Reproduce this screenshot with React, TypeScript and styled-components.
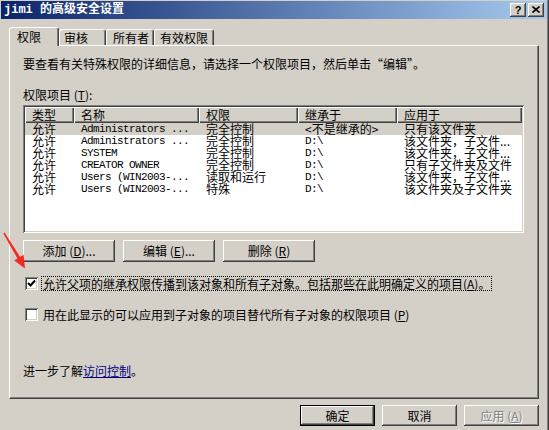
import React from "react";
import styled, { createGlobalStyle } from "styled-components";

const Global = createGlobalStyle`
  html, body { margin: 0; padding: 0; background: #d4d0c8; }
  body {
    font-family: "Noto Sans CJK SC", "Noto Sans", sans-serif;
    font-size: 12px;
    color: #000;
  }
  * { box-sizing: border-box; }
`;

const Window = styled.div`
  position: relative;
  width: 549px;
  height: 430px;
  background: #d4d0c8;
  padding: 1px 2px 0 1px;
  box-shadow: inset -1px 0 0 #404040, inset -2px 0 0 #808080;
  display: flex;
  flex-direction: column;
  overflow: hidden;
`;

const TitleBar = styled.div`
  height: 18px;
  display: flex;
  align-items: center;
  justify-content: space-between;
  padding: 0 3px 0 3px;
  background: linear-gradient(to right, #0a246a, #a6caf0);
`;

const TitleText = styled.div`
  color: #fff;
  font-weight: bold;
  font-family: "Liberation Mono", "Noto Sans CJK SC", monospace;
  font-size: 12px;
  line-height: 18px;
  white-space: nowrap;
`;

const TitleButtons = styled.div`
  display: flex;
  gap: 2px;
`;

const TitleButton = styled.div`
  width: 16px;
  height: 14px;
  background: #d4d0c8;
  box-shadow: inset -1px -1px 0 #404040, inset 1px 1px 0 #fff,
    inset -2px -2px 0 #808080;
  display: flex;
  align-items: center;
  justify-content: center;
  font-family: "Liberation Sans", sans-serif;
  font-weight: bold;
  font-size: 11px;
  line-height: 14px;
  color: #000;
  padding-bottom: 1px;
`;

const Body = styled.div`
  padding: 8px 8px 0 8px;
  display: flex;
  flex-direction: column;
`;

const TabStrip = styled.div`
  display: flex;
  align-items: flex-end;
  height: 18px;
  position: relative;
  z-index: 1;
`;

const Tab = styled.div<{ $w: number; $active?: boolean; $pad: number }>`
  width: ${(p) => p.$w}px;
  height: ${(p) => (p.$active ? 19 : 16)}px;
  margin-bottom: ${(p) => (p.$active ? -1 : 0)}px;
  background: #d4d0c8;
  border-top: 1px solid #fff;
  border-left: 1px solid #fff;
  border-right: 1px solid #404040;
  border-radius: 3px 3px 0 0;
  box-shadow: inset -1px 0 0 #808080;
  padding-left: ${(p) => p.$pad}px;
  padding-top: ${(p) => (p.$active ? 1 : 0)}px;
  line-height: ${(p) => (p.$active ? 16 : 15)}px;
  white-space: nowrap;
`;

const Panel = styled.div`
  height: 354px;
  background: #d4d0c8;
  border-top: 1px solid #fff;
  border-left: 1px solid #fff;
  border-right: 1px solid #404040;
  border-bottom: 1px solid #404040;
  box-shadow: inset -1px -1px 0 #808080;
  padding: 10px 16px 0 13px;
  display: flex;
  flex-direction: column;
`;

const TextLine = styled.div<{ $mt?: number }>`
  line-height: 16px;
  height: 16px;
  white-space: nowrap;
  margin-top: ${(p) => p.$mt ?? 0}px;
`;

const ListView = styled.div`
  margin-top: 2px;
  width: 501px;
  height: 128px;
  padding: 2px;
  background: #fff;
  box-shadow: inset 1px 1px 0 #808080, inset -1px -1px 0 #fff,
    inset 2px 2px 0 #404040, inset -2px -2px 0 #d4d0c8;
`;

const COLS = "49px 125px 99px 99px 125px";

const HeaderRow = styled.div`
  display: grid;
  grid-template-columns: ${COLS};
  height: 16px;
`;

const HeaderCell = styled.div`
  background: #d4d0c8;
  padding-left: 7px;
  line-height: 16px;
  white-space: nowrap;
  box-shadow: inset 1px 1px 0 #fff, inset -1px -1px 0 #404040,
    inset -2px -2px 0 #808080;
`;

const Row = styled.div<{ $selected?: boolean }>`
  display: grid;
  grid-template-columns: ${COLS};
  height: 12px;
  background: ${(p) => (p.$selected ? "#d4d0c8" : "#fff")};
`;

const Cell = styled.div<{ $mono?: boolean }>`
  padding-left: 7px;
  line-height: 12px;
  white-space: nowrap;
  font-family: ${(p) =>
    p.$mono
      ? `"Liberation Mono", "Noto Sans CJK SC", monospace`
      : `"Noto Sans CJK SC", sans-serif`};
  font-size: ${(p) => (p.$mono ? 11 : 12)}px;
  letter-spacing: ${(p) => (p.$mono ? -0.6 : 0)}px;
`;

const ButtonRow = styled.div<{ $mt: number; $gap: number; $end?: boolean }>`
  display: flex;
  gap: ${(p) => p.$gap}px;
  margin-top: ${(p) => p.$mt}px;
  justify-content: ${(p) => (p.$end ? "flex-end" : "flex-start")};
`;

const Button = styled.div<{ $w: number; $h: number; $default?: boolean; $disabled?: boolean }>`
  width: ${(p) => p.$w}px;
  height: ${(p) => p.$h}px;
  background: #d4d0c8;
  display: flex;
  align-items: center;
  justify-content: center;
  white-space: nowrap;
  border: ${(p) => (p.$default ? "1px solid #000" : "none")};
  box-shadow: inset -1px -1px 0 #404040, inset 1px 1px 0 #fff,
    inset -2px -2px 0 #808080;
  color: ${(p) => (p.$disabled ? "#808080" : "#000")};
  text-shadow: ${(p) => (p.$disabled ? "1px 1px 0 #fff" : "none")};
  line-height: 14px;
`;

const CheckRow = styled.div<{ $mt: number }>`
  display: flex;
  align-items: center;
  height: 15px;
  margin-top: ${(p) => p.$mt}px;
  padding-left: 2px;
`;

const CheckBox = styled.div`
  width: 13px;
  height: 13px;
  background: #fff;
  box-shadow: inset 1px 1px 0 #808080, inset -1px -1px 0 #fff,
    inset 2px 2px 0 #404040, inset -2px -2px 0 #d4d0c8;
  display: flex;
  align-items: center;
  justify-content: center;
  flex: none;
`;

const CheckLabel = styled.div<{ $focus?: boolean }>`
  margin-left: 3px;
  height: 15px;
  padding: 0 1px;
  line-height: 13px;
  white-space: nowrap;
  border: 1px dotted ${(p) => (p.$focus ? "#000" : "transparent")};
`;

const Link = styled.span`
  color: #000080;
  text-decoration: underline;
`;

const ArrowOverlay = styled.svg`
  position: absolute;
  left: 0;
  top: 226px;
  width: 32px;
  height: 46px;
  z-index: 5;
`;

type RowData = {
  type: string;
  name: string;
  perm: string;
  from: string;
  fromMono: boolean;
  apply: string;
};

const rows: RowData[] = [
  { type: "允许", name: "Administrators ...", perm: "完全控制", from: "<不是继承的>", fromMono: false, apply: "只有该文件夹" },
  { type: "允许", name: "Administrators ...", perm: "完全控制", from: "D:\\", fromMono: true, apply: "该文件夹，子文件..." },
  { type: "允许", name: "SYSTEM", perm: "完全控制", from: "D:\\", fromMono: true, apply: "该文件夹，子文件..." },
  { type: "允许", name: "CREATOR OWNER", perm: "完全控制", from: "D:\\", fromMono: true, apply: "只有子文件夹及文件" },
  { type: "允许", name: "Users (WIN2003-...", perm: "读取和运行", from: "D:\\", fromMono: true, apply: "该文件夹，子文件..." },
  { type: "允许", name: "Users (WIN2003-...", perm: "特殊", from: "D:\\", fromMono: true, apply: "该文件夹及子文件夹" },
];

const tabs = [
  { label: "权限", w: 50, pad: 7, active: true },
  { label: "审核", w: 47, pad: 4 },
  { label: "所有者", w: 48, pad: 6 },
  { label: "有效权限", w: 60, pad: 5 },
];

const Arrow = () => {
  const pts: [number, number][] = [
    [4.5, 232.6],
    [20.1, 256.9],
    [23.6, 254.8],
    [25, 268.5],
    [14.2, 260.6],
    [17.5, 258.5],
    [3.3, 233.4],
  ];
  return (
    <ArrowOverlay viewBox="0 226 32 46">
      <polygon points={pts.map((p) => p.join(",")).join(" ")} fill="#f52a1e" />
    </ArrowOverlay>
  );
};

const Check = () => (
  <svg width="9" height="9" viewBox="0 0 9 9">
    <polyline points="1,4 3.5,6.5 8,1.5" fill="none" stroke="#000" strokeWidth="2" />
  </svg>
);

export default function App() {
  return (
    <>
      <Global />
      <Window>
        <TitleBar>
          <TitleText>jimi 的高级安全设置</TitleText>
          <TitleButtons>
            <TitleButton>?</TitleButton>
            <TitleButton>
              <svg width="8" height="7" viewBox="0 0 8 7">
                <path d="M0.5 0.5 L7.5 6.5 M7.5 0.5 L0.5 6.5" stroke="#000" strokeWidth="1.6" />
              </svg>
            </TitleButton>
          </TitleButtons>
        </TitleBar>
        <Body>
          <TabStrip>
            {tabs.map((t) => (
              <Tab key={t.label} $w={t.w} $pad={t.pad} $active={t.active}>
                {t.label}
              </Tab>
            ))}
          </TabStrip>
          <Panel>
            <TextLine>要查看有关特殊权限的详细信息，请选择一个权限项目，然后单击“编辑”。</TextLine>
            <TextLine $mt={15}>
              权限项目 (<u>T</u>):
            </TextLine>
            <ListView>
              <HeaderRow>
                <HeaderCell>类型</HeaderCell>
                <HeaderCell>名称</HeaderCell>
                <HeaderCell>权限</HeaderCell>
                <HeaderCell>继承于</HeaderCell>
                <HeaderCell>应用于</HeaderCell>
              </HeaderRow>
              {rows.map((r, i) => (
                <Row key={i} $selected={i === 0}>
                  <Cell>{r.type}</Cell>
                  <Cell $mono>{r.name}</Cell>
                  <Cell>{r.perm}</Cell>
                  <Cell $mono={r.fromMono}>{r.from}</Cell>
                  <Cell>{r.apply}</Cell>
                </Row>
              ))}
            </ListView>
            <ButtonRow $mt={7} $gap={8}>
              <Button $w={92} $h={22}>
                添加 (<u>D</u>)...
              </Button>
              <Button $w={92} $h={22}>
                编辑 (<u>E</u>)...
              </Button>
              <Button $w={92} $h={22}>
                删除 (<u>R</u>)
              </Button>
            </ButtonRow>
            <CheckRow $mt={14}>
              <CheckBox>
                <Check />
              </CheckBox>
              <CheckLabel $focus>
                允许父项的继承权限传播到该对象和所有子对象。包括那些在此明确定义的项目(<u>A</u>)。
              </CheckLabel>
            </CheckRow>
            <CheckRow $mt={16}>
              <CheckBox />
              <CheckLabel>
                用在此显示的可以应用到子对象的项目替代所有子对象的权限项目 (<u>P</u>)
              </CheckLabel>
            </CheckRow>
            <TextLine $mt={41}>
              进一步了解<Link>访问控制</Link>。
            </TextLine>
          </Panel>
          <ButtonRow $mt={6} $gap={7} $end>
            <Button $w={75} $h={21} $default>
              确定
            </Button>
            <Button $w={75} $h={21}>
              取消
            </Button>
            <Button $w={75} $h={21} $disabled>
              应用 (<u>A</u>)
            </Button>
          </ButtonRow>
        </Body>
        <Arrow />
      </Window>
    </>
  );
}
